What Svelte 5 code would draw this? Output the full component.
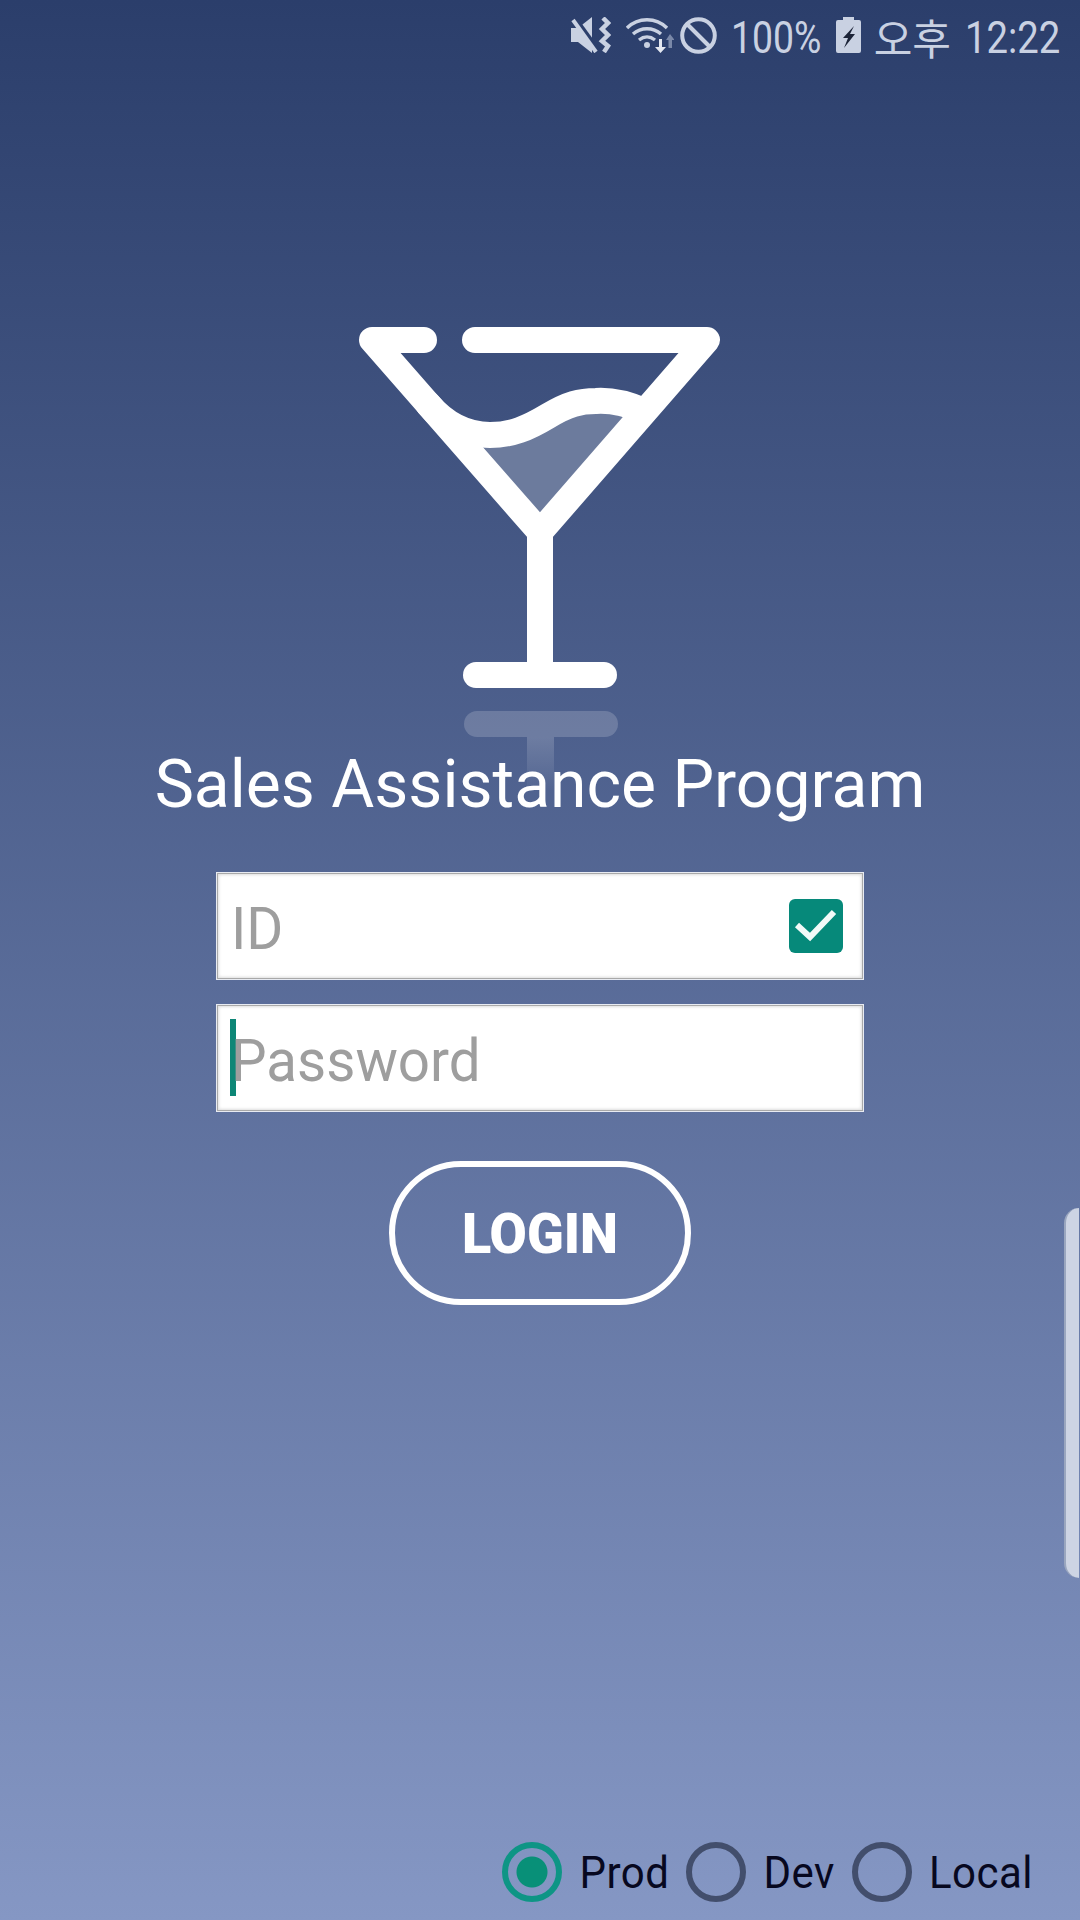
<script>
  const modes = [
    { name: 'Prod', on: true },
    { name: 'Dev', on: false },
    { name: 'Local', on: false }
  ];
</script>

<div class="page">
  <header class="status">
    <svg class="i-mute" viewBox="0 0 40 36" aria-hidden="true">
      <path d="M0 11h7L21 0v36L7 25H0z" fill="#c9d1e2"/>
      <path d="M3 1l24 33" stroke="#2c3f6c" stroke-width="6"/>
      <path d="M2 3l23 32" stroke="#c9d1e2" stroke-width="4"/>
      <path d="M32 1l5 5-6 6 6 6-6 6 6 5-4 6" fill="none" stroke="#c9d1e2" stroke-width="4.500"/>
    </svg>
    <svg class="i-wifi" viewBox="0 0 48 36" aria-hidden="true">
      <g fill="none" stroke="#c9d1e2" stroke-width="3.4">
        <path d="M1 11c11-11 29-11 40 0"/>
        <path d="M7 17c8-7 20-7 28 0"/>
        <path d="M13 23c5-4 11-4 16 0"/>
      </g>
      <circle cx="21" cy="28" r="3" fill="#c9d1e2"/>
      <path d="M33 22h3v8h4l-5.500 6-5.500-6h4z" fill="#e3e7f0"/>
      <path d="M44 17l4.500 6H46v8h-3.500v-8H40z" fill="#7a88a8"/>
    </svg>
    <svg class="i-block" viewBox="0 0 37 37" aria-hidden="true">
      <circle cx="18.500" cy="18.500" r="16.300" fill="none" stroke="#c9d1e2" stroke-width="4"/>
      <path d="M7 7l23 23" stroke="#c9d1e2" stroke-width="4"/>
    </svg>
    <span class="pct">100%</span>
    <svg class="i-batt" viewBox="0 0 25 36" aria-hidden="true">
      <path d="M7 0h11v3h5a2 2 0 0 1 2 2v29a2 2 0 0 1-2 2H2a2 2 0 0 1-2-2V5a2 2 0 0 1 2-2h5z" fill="#c9d1e2"/>
      <path d="M18 9L7 21h5l-4 10 11-14h-5l4-8z" fill="#1c2438"/>
    </svg>
    <span class="ampm">오후</span>
    <span class="clock">12:22</span>
  </header>

  <svg class="logo" viewBox="340 310 400 430" aria-hidden="true">
    <defs>
      <linearGradient id="fade" x1="0" y1="737" x2="0" y2="790" gradientUnits="userSpaceOnUse">
        <stop offset="0" stop-color="#fff" stop-opacity="0.18"/>
        <stop offset="1" stop-color="#fff" stop-opacity="0.02"/>
      </linearGradient>
    </defs>
    <path d="M483 447C505 448 525 442 545 430C565 418 578 413 595 413C605 412 613 414 623 417L540 513Z" fill="#6c7b9d"/>
    <g fill="none" stroke="#fff" stroke-width="26" stroke-linecap="round" stroke-linejoin="round">
      <path d="M424 340H372L540 532L707 340H475"/>
      <path d="M540 532V675" stroke-linecap="butt"/>
      <path d="M476 675H604"/>
      <path d="M428 404C445 424 465 435 490 435C512 435 528 428 548 416C568 404 580 401 596 401C612 400 628 404 644 411"/>
    </g>
    <rect x="464" y="711" width="154" height="26" rx="13" fill="#fff" fill-opacity="0.18"/>
    <rect x="527" y="737" width="27" height="53" fill="url(#fade)"/>
  </svg>

  <h1 class="title">Sales Assistance Program</h1>

  <form class="form">
    <div class="field">
      <input type="text" placeholder="ID" />
      <svg class="check" viewBox="0 0 54 54" aria-hidden="true">
        <rect width="54" height="54" rx="6" fill="#06897a"/>
        <path d="M8 26L21 38L45 13" fill="none" stroke="#f2faf8" stroke-width="6"/>
      </svg>
    </div>
    <div class="field">
      <span class="caret"></span>
      <input type="password" placeholder="Password" />
    </div>
    <button type="button" class="login"><span class="login-text">LOGIN</span></button>
  </form>

  <div class="modes">
    {#each modes as m}
      <label class="mode">
        <span class="radio" class:on={m.on}></span>
        <span class="mode-name">{m.name}</span>
      </label>
    {/each}
  </div>

  <div class="edge"></div>
</div>

<style>
  :global(body) {
    margin: 0;
  }
  .page {
    position: relative;
    width: 1080px;
    height: 1920px;
    overflow: hidden;
    display: flex;
    flex-direction: column;
    align-items: center;
    background: linear-gradient(180deg, #2b3e6b 0%, #8597c4 100%);
    font-family: Roboto, "Noto Sans", sans-serif;
  }
  .status {
    align-self: stretch;
    height: 70px;
    box-sizing: border-box;
    padding-right: 19px;
    display: flex;
    justify-content: flex-end;
    align-items: center;
    color: #c9d1e2;
    font-size: 44px;
  }
  .i-mute {
    width: 40px;
    height: 36px;
    margin-right: 15px;
  }
  .i-wifi {
    width: 48px;
    height: 36px;
    margin-right: 6px;
  }
  .i-block {
    width: 37px;
    height: 37px;
    margin-right: 14px;
  }
  .pct {
    width: 92px;
    margin-top: 5px;
    margin-right: 13px;
    white-space: nowrap;
    transform: scaleX(0.85);
    transform-origin: left center;
  }
  .i-batt {
    width: 25px;
    height: 36px;
    margin-right: 13px;
  }
  .ampm {
    font-family: "Noto Sans CJK KR", sans-serif;
    font-size: 42px;
    margin-top: 2px;
    margin-right: 14px;
  }
  .clock {
    width: 96px;
    margin-top: 5px;
    white-space: nowrap;
    transform: scaleX(0.87);
    transform-origin: left center;
  }
  .logo {
    width: 400px;
    height: 430px;
    margin-top: 240px;
    overflow: visible;
    flex: none;
  }
  .title {
    margin: 0;
    font-size: 66px;
    line-height: 90px;
    font-weight: 400;
    color: #fff;
    white-space: nowrap;
    position: relative;
  }
  .form {
    margin-top: 42px;
    display: flex;
    flex-direction: column;
    align-items: center;
    gap: 24px;
  }
  .field {
    position: relative;
    box-sizing: border-box;
    width: 648px;
    height: 108px;
    background: #fff;
    border: 1px solid #e8ebf2;
    box-shadow: inset 0 0 0 1px #a9a9a9, inset 0 0 3px 2px #ddd;
    display: flex;
    align-items: center;
    padding: 0 20px 0 14px;
  }
  .field input {
    flex: 1;
    min-width: 0;
    height: 100%;
    padding: 5px 0 0;
    box-sizing: border-box;
    border: 0;
    outline: 0;
    background: transparent;
    font: 400 56.500px Roboto, sans-serif;
    color: #333;
    transform: scaleY(1.05);
  }
  .field input::placeholder {
    color: #9e9e9e;
    opacity: 1;
  }
  .check {
    width: 54px;
    height: 54px;
    flex: none;
  }
  .caret {
    position: absolute;
    left: 13px;
    top: 14px;
    width: 6px;
    height: 77px;
    background: #00806f;
    opacity: 0.95;
  }
  .login {
    margin-top: 25px;
    box-sizing: border-box;
    width: 302px;
    height: 144px;
    border: 6px solid #fff;
    border-radius: 72px;
    background: transparent;
    color: #fff;
    font: 900 54px Roboto, sans-serif;
  }
  .login-text {
    display: inline-block;
    transform: scaleY(1.04);
  }
  .modes {
    margin-top: auto;
    margin-bottom: 18px;
    align-self: flex-end;
    margin-right: 47px;
    display: flex;
    gap: 17px;
  }
  .mode {
    display: flex;
    align-items: center;
    gap: 17px;
    font-size: 42px;
    letter-spacing: 0.500px;
    color: #07081f;
  }
  .mode-name {
    display: inline-block;
    transform: scaleY(1.06);
  }
  .radio {
    box-sizing: border-box;
    width: 60px;
    height: 60px;
    border: 6px solid #424e6c;
    border-radius: 50%;
    display: block;
    position: relative;
  }
  .radio.on {
    border-color: #0e9585;
    background: radial-gradient(circle, #089078 0 15px, transparent 16px);
  }
  .edge {
    position: absolute;
    right: 1px;
    top: 1208px;
    width: 15px;
    height: 370px;
    box-sizing: border-box;
    background: #cdd4e4;
    border-left: 2px solid #9aa6bf;
    border-radius: 15px 0 0 15px;
  }
</style>
